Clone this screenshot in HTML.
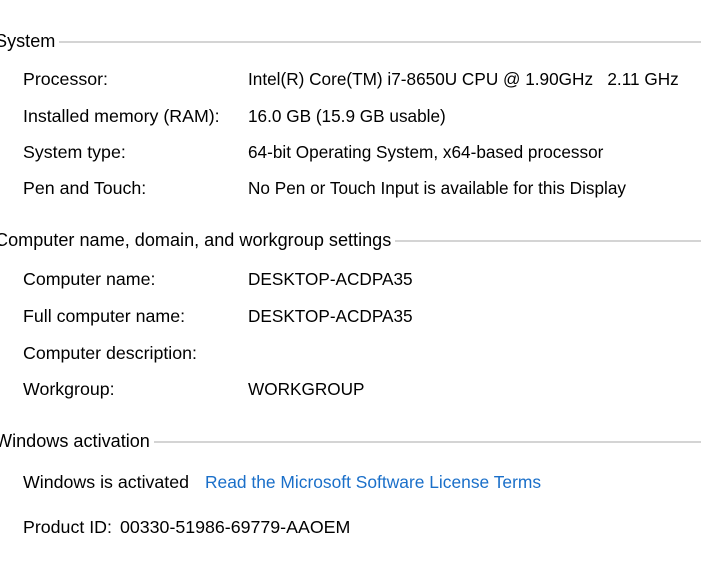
<!DOCTYPE html>
<html><head><style>
body{margin:0;width:701px;height:567px;background:#fff;overflow:hidden;position:relative;font-family:"Liberation Sans",sans-serif;font-size:17.8px;color:#000}
.t{position:absolute;white-space:nowrap;line-height:20px}
.h{position:absolute;left:-5px;right:0;display:flex;align-items:center;line-height:20px;white-space:nowrap;font-size:18.1px}
.h::after{content:"";flex:1;height:2px;background:#d4d4d4;margin-left:4px;margin-top:2px}
.l{left:23px}.v{left:248px;font-size:17.2px}
a{color:#1a6fc9;text-decoration:none;font-size:17.4px}
</style></head><body>
<div class="h" style="top:31px">System</div>
<div class="t l" style="top:69px">Processor:</div><div class="t v" style="top:69px">Intel(R) Core(TM) i7-8650U CPU @ 1.90GHz &nbsp; 2.11 GHz</div>
<div class="t l" style="top:106px">Installed memory (RAM):</div><div class="t v" style="top:106px">16.0 GB (15.9 GB usable)</div>
<div class="t l" style="top:142px">System type:</div><div class="t v" style="top:142px">64-bit Operating System, x64-based processor</div>
<div class="t l" style="top:178px">Pen and Touch:</div><div class="t v" style="top:178px">No Pen or Touch Input is available for this Display</div>
<div class="h" style="top:230px">Computer name, domain, and workgroup settings</div>
<div class="t l" style="top:269px">Computer name:</div><div class="t v" style="top:269px">DESKTOP-ACDPA35</div>
<div class="t l" style="top:306px">Full computer name:</div><div class="t v" style="top:306px">DESKTOP-ACDPA35</div>
<div class="t l" style="top:343px">Computer description:</div>
<div class="t l" style="top:379px">Workgroup:</div><div class="t v" style="top:379px">WORKGROUP</div>
<div class="h" style="top:431px">Windows activation</div>
<div class="t l" style="top:472px">Windows is activated</div><div class="t" style="left:205px;top:472px"><a>Read the Microsoft Software License Terms</a></div>
<div class="t l" style="top:517px">Product ID:</div><div class="t" style="left:120px;top:517px">00330-51986-69779-AAOEM</div>
</body></html>
